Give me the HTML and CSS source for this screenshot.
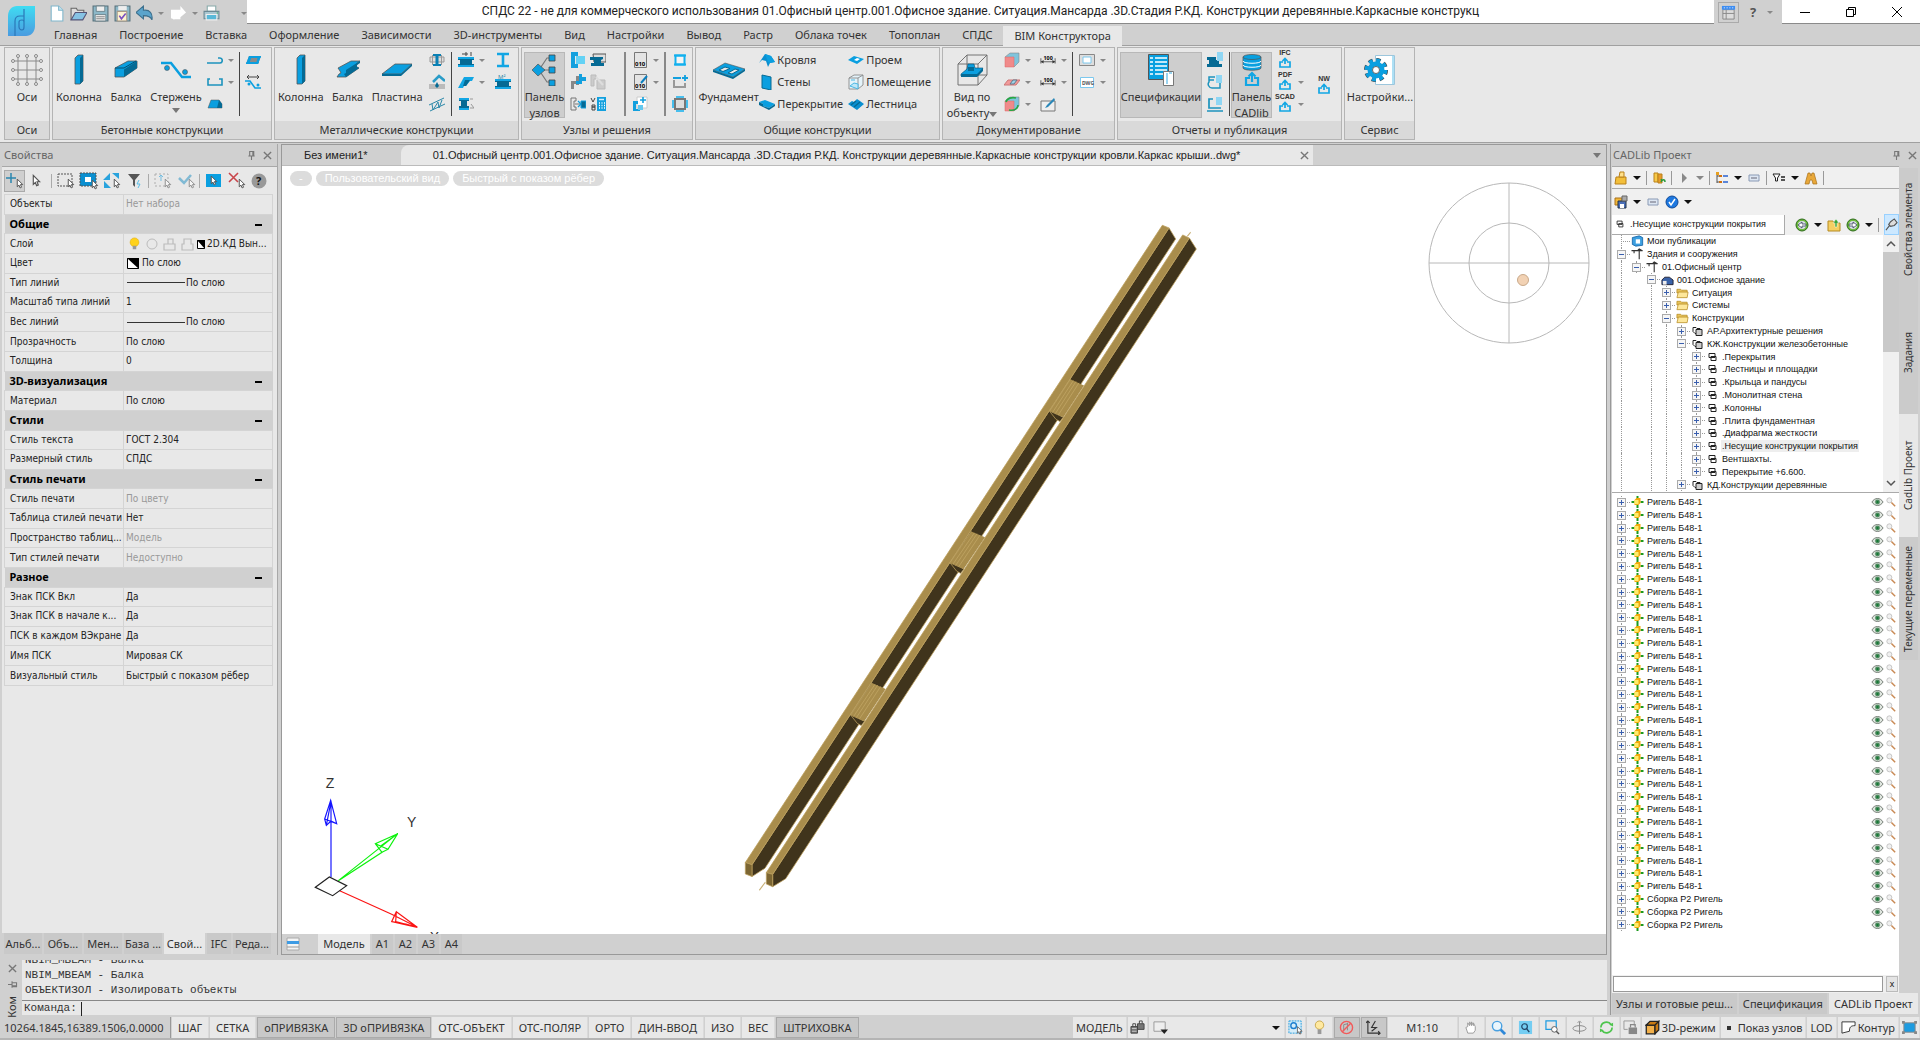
FILE: index.html
```html
<!DOCTYPE html>
<html lang="ru">
<head>
<meta charset="utf-8">
<title>СПДС 22</title>
<link rel="stylesheet" href="styles.css">
</head>
<body>
<svg class="defs" aria-hidden="true">
  <defs>
    <linearGradient id="lg" x1="0" y1="0" x2="0" y2="1"><stop offset="0" stop-color="#3fdcf2"/><stop offset="1" stop-color="#4a9be0"/></linearGradient>
    <symbol id="cur" viewBox="0 0 7 10"><path d="M1 1v7l1.600-1.500L3.600 9l1.300-.6-1-2.400H6z" fill="#fff" stroke="#555" stroke-width=".9"/></symbol>
    <symbol id="pin" viewBox="0 0 10 12"><path d="M3 1.500h4.500v5H3zM1.500 6.500h7M5 6.500V11M6.500 1.500v5" fill="none" stroke="#777" stroke-width="1.200"/></symbol>
    <symbol id="x" viewBox="0 0 10 10"><path d="M1 1l8 8M9 1l-8 8" stroke="#777" stroke-width="1.500"/></symbol>
    <symbol id="col" viewBox="0 0 32 32"><path d="M12 4l3-3h5v26l-3 3h-5z" fill="#0a9fe0" stroke="#555" stroke-width=".8"/><path d="M17 4l3-3v26l-3 3z" fill="#056a94"/></symbol>
    <symbol id="beam" viewBox="0 0 32 32"><path d="M5 14L18 7h9v7L14 23H5z" fill="#0a9fe0" stroke="#555" stroke-width=".8"/><path d="M14 15.500L27 7v7L14 23z" fill="#056a94"/><path d="M5 14h9l12-7" stroke="#044e6e" fill="none"/></symbol>
    <symbol id="rod" viewBox="0 0 32 32"><path d="M1 9h10l11 14h9" stroke="#0a9fe0" stroke-width="2.500" fill="none"/><circle cx="7" cy="14" r="2.500" fill="#0a9fe0" stroke="#555" stroke-width=".6"/><circle cx="25" cy="18" r="2.500" fill="#0a9fe0" stroke="#555" stroke-width=".6"/></symbol>
    <symbol id="axes" viewBox="0 0 32 32"><path d="M7 3v26M16 3v26M25 3v26M3 7h26M3 16h26M3 25h26" stroke="#8a8a8a" fill="none"/><g fill="#eee" stroke="#888"><circle cx="7" cy="2" r="1.500"/><circle cx="16" cy="2" r="1.500"/><circle cx="25" cy="2" r="1.500"/><circle cx="7" cy="30" r="1.500"/><circle cx="16" cy="30" r="1.500"/><circle cx="25" cy="30" r="1.500"/><circle cx="2" cy="7" r="1.500"/><circle cx="2" cy="16" r="1.500"/><circle cx="2" cy="25" r="1.500"/><circle cx="30" cy="7" r="1.500"/><circle cx="30" cy="16" r="1.500"/><circle cx="30" cy="25" r="1.500"/></g></symbol>
    <symbol id="mbeam" viewBox="0 0 32 32"><path d="M6 14L19 7h9l-3 2v2l-2 1 4 2-13 9H5l2-3 2-1-1-2z" fill="#0a9fe0" stroke="#555" stroke-width=".8"/><path d="M14 16l14-9v2l-3 2v2l2 1-13 9-2-3 2-1z" fill="#056a94"/></symbol>
    <symbol id="plate" viewBox="0 0 32 32"><path d="M1 20L14 10h17L20 20z" fill="#0a9fe0" stroke="#555" stroke-width=".8"/><path d="M1 20v2h19l11-10v-2L20 20z" fill="#056a94"/></symbol>
    <symbol id="nodes" viewBox="0 0 32 32"><path d="M10 16L18 4h6M10 16h14M10 16l8 12h6" stroke="#777" fill="none" stroke-width="1.200"/><path d="M3 16l6-6 7 6-7 6z" fill="#0a9fe0" stroke="#555" stroke-width=".7"/><path d="M20 1h6v6h-6zM20 13h6v6h-6zM20 26h6v6h-6z" fill="#0a9fe0" stroke="#444" stroke-width=".8"/></symbol>
    <symbol id="found" viewBox="0 0 32 32"><path d="M0 16l12-7 20 6-12 8z" fill="#0a9fe0" stroke="#555" stroke-width=".6"/><path d="M6 16l6-3 5 1.500-7 3zM15 19l7-4 4 1-7 4z" fill="#e8e8e8" stroke="#056a94"/><path d="M0 16v2l20 7 12-8v-2l-12 8z" fill="#056a94"/></symbol>
    <symbol id="viewobj" viewBox="0 0 32 32"><path d="M2 10l9-9h20v20l-9 10H2zM2 10h20v21M22 10l9-9M11 1v20M11 21h20" stroke="#666" fill="none" stroke-width=".9"/><path d="M5 20l6-5 1-5h6l1 4h8l-6 8H5z" fill="#0a9fe0" stroke="#044e6e" stroke-width=".6"/><path d="M5 20h16v3H5zM12 13h6v4h-6zM21 20l6-6v3l-6 6z" fill="#056a94"/></symbol>
    <symbol id="spec" viewBox="0 0 32 32"><path d="M3.500.5h20v25h-20z" fill="#08a0e0" stroke="#555"/><path d="M5 4h3m2 0h12M5 8h3m2 0h12M5 12h3m2 0h12M5 16h3m2 0h12M5 20h3m2 0h12" stroke="#fff" stroke-width="1.300"/><path d="M18.500 17.500h10v14h-10z" fill="#fff" stroke="#777"/><path d="M22 19v11M24 19h3" stroke="#9ad4f0" stroke-width="2"/></symbol>
    <symbol id="db" viewBox="0 0 32 32"><path d="M7 3v11c0 3 18 3 18 0V3z" fill="#08a0e0" stroke="#555" stroke-width=".7"/><ellipse cx="16" cy="3" rx="9" ry="2.500" fill="#08a0e0" stroke="#555" stroke-width=".7"/><path d="M7 7c0 3 18 3 18 0M7 11c0 3 18 3 18 0" stroke="#fff" fill="none"/><path d="M16 28V19m-3.500 3.500L16 19l3.500 3.500M14 24h-4v7h12v-7h-4" stroke="#12a6e4" stroke-width="2.200" fill="none"/></symbol>
    <symbol id="gear" viewBox="0 0 32 32"><path d="M11.500 1.500h19v29h-19z" fill="#fff" stroke="#9cc6dc"/><path d="M29 2v28" stroke="#ade0f5" stroke-width="2"/><circle cx="12" cy="16" r="9.500" fill="none" stroke="#444" stroke-width="5" stroke-dasharray="4 3.460"/><circle cx="12" cy="16" r="9.300" fill="none" stroke="#0a9fe0" stroke-width="4.200" stroke-dasharray="3.800 3.500"/><circle cx="12" cy="16" r="6" fill="none" stroke="#0a9fe0" stroke-width="5"/><circle cx="12" cy="16" r="3.500" fill="#fff" stroke="#444" stroke-width=".8"/></symbol>
    <symbol id="up" viewBox="0 0 16 16"><path d="M8 12V7M5.500 9L8 6.500 10.500 9M6 10H3v5h10v-5h-3" stroke="#12a6e4" stroke-width="1.700" fill="none"/></symbol>
    <symbol id="hook1" viewBox="0 0 16 16"><path d="M0 11h13c3 0 3-5 0-5h-2" stroke="#1c93bd" stroke-width="1.600" fill="none"/></symbol>
    <symbol id="hook2" viewBox="0 0 16 16"><path d="M3 5H1v6h14V5h-3" stroke="#1c93bd" stroke-width="1.600" fill="none"/></symbol>
    <symbol id="block" viewBox="0 0 16 16"><path d="M1 12L4 4h8l3 4v4z" fill="#0a9fe0" stroke="#555" stroke-width=".5"/><path d="M10 12l2-8 3 4v4z" fill="#056a94"/></symbol>
    <symbol id="slab" viewBox="0 0 16 16"><path d="M1 12L4 4h12l-3 8z" fill="#8a8a8a"/><path d="M4 4h12l-.6 2H4zM1 12l.6-2H14l-1 2z" fill="#0a9fe0"/><path d="M1 12L4 4h3l-3 8zM13 4h3l-3 8h-2z" fill="#0a9fe0"/></symbol>
    <symbol id="rodm" viewBox="0 0 16 16"><path d="M2 3h12M4 1L2 3l2 2M12 1l2 2-2 2" stroke="#444" fill="none"/><path d="M0 7h5l5 7h6" stroke="#0a9fe0" stroke-width="1.600" fill="none"/><circle cx="4" cy="10" r="1.500" fill="#0a9fe0"/><circle cx="13" cy="11" r="1.500" fill="#0a9fe0"/></symbol>
    <symbol id="sec" viewBox="0 0 16 16"><path d="M1 5h14v5H1zM3.500 3v10M12.500 3v10" stroke="#999" fill="#ddd"/><path d="M4 2h8v2H9.500v8H12v2H4v-2h2.500V4H4z" fill="#0a80b4"/></symbol>
    <symbol id="anc" viewBox="0 0 16 16"><path d="M4 8l6-6 6 5" stroke="#2a9cc8" stroke-width="2.500" fill="none"/><path d="M0 10h16v5H0z" fill="#bbb"/><path d="M8 8l2 4-2 2-2-2z" fill="#066a94"/></symbol>
    <symbol id="truss" viewBox="0 0 16 16"><path d="M0 9L15 2M1 15L16 8M3 8l1 6 5-8 1 6 3-8" stroke="#2a87a8" fill="none"/></symbol>
    <symbol id="ib" viewBox="0 0 16 16"><path d="M0 5h16v3h-2v4h2v3H0v-3h2V8H0z" fill="#056a94"/><path d="M0 5h16v2H0zM0 13h16v2H0z" fill="#12a6e4"/></symbol>
    <symbol id="ibt" viewBox="0 0 16 16"><use href="#ib"/><path d="M4 2h6M8 0v4M13 0v4" stroke="#444"/></symbol>
    <symbol id="ibp" viewBox="0 0 16 16"><path d="M0 14L6 3h10l-2 4h-2L8 12H6l-1 2z" fill="#12a6e4"/><path d="M7 6h5l-4 6H5z" fill="#056a94"/></symbol>
    <symbol id="ibc" viewBox="0 0 16 16"><path d="M12 3h3M13 8l3 4h-4" stroke="#999" fill="none"/><path d="M1 2h10v3H9v5h2v4H1v-4h2V5H1z" fill="#056a94"/><path d="M1 2h10v2H1zM1 12h10v2H1z" fill="#12a6e4"/></symbol>
    <symbol id="I" viewBox="0 0 16 16"><path d="M2 2h12M2 14h12M8 2v12" stroke="#12a6e4" stroke-width="2.600"/></symbol>
    <symbol id="n1" viewBox="0 0 16 16"><path d="M1 0h7v4H5v8h3v4H1z" fill="#12a0de"/><path d="M6 4h9v8H6z" fill="#63d2f5"/></symbol>
    <symbol id="n2" viewBox="0 0 16 16"><path d="M1 7h5v3H4v5H1zM6 2h5v3H9v6H6z" fill="#888"/><path d="M9 0h3v10H6V7h3zM12 3h4v4h-4z" fill="#12a0de"/></symbol>
    <symbol id="n3" viewBox="0 0 16 16"><path d="M6 2H1v12h5v-3H4V5h2zM5 8h5" stroke="#777" fill="none"/><path d="M8 5l3 3-3 3" stroke="#12a0de" fill="none" stroke-width="1.300"/><path d="M11 5h5v7h-5z" fill="#066a94" stroke="#12a0de"/></symbol>
    <symbol id="n4" viewBox="0 0 16 16"><path d="M3 2h13v8H4z" fill="#ddd" stroke="#555"/><path d="M0 5h13v2l-2 1v3h3v3H1v-3h3V8H0z" fill="#056a94"/></symbol>
    <symbol id="n5" viewBox="0 0 16 16"><path d="M1 1h5v4H4v7H1zM7 6h8v9H7z" fill="#ccc" stroke="#bbb"/><path d="M6 3l7 8" stroke="#ddd" stroke-width="2"/></symbol>
    <symbol id="n6" viewBox="0 0 16 16"><path d="M7 1h9v14H7z" fill="#12a0de"/><path d="M9 3.500h5" stroke="#cfefff" stroke-width="1.500"/><path d="M9 7h1m1.500 0h1m1.500 0h1M9 9.500h1m1.500 0h1m1.500 0h1M9 12h1m1.500 0h1m1.500 0h1" stroke="#fff" stroke-width="1.300"/><path d="M1 2l2 4 2-4M2 9h3v2H2zM2 11h3v3H2z" stroke="#444" fill="none"/></symbol>
    <symbol id="o1" viewBox="0 0 16 16"><path d="M2.500.5h12v15h-12z" fill="#e4e4e4" stroke="#777"/><text x="3" y="14" font-size="6" font-weight="bold">010</text></symbol>
    <symbol id="o2" viewBox="0 0 16 16"><use href="#o1"/><path d="M15 2L9 9" stroke="#0a7fc0" stroke-width="2"/></symbol>
    <symbol id="o3" viewBox="0 0 16 16"><path d="M5 1h10v11H5z" fill="#fff" stroke="#ccc"/><path d="M1 5h5v3H4v5h4v2H1z" fill="#12a0de"/><path d="M6 9h5v5H6z" fill="#63c8ef"/><path d="M11 1v6M8 4h6" stroke="#12a0de" stroke-width="1.600"/></symbol>
    <symbol id="q1" viewBox="0 0 16 16"><path d="M3.500 3.500h9v9h-9z" stroke="#12b0ee" stroke-width="2" fill="#f4f4f4"/><path d="M2 3.500h12M2 12.500h12" stroke="#12b0ee" stroke-width="2"/></symbol>
    <symbol id="q2" viewBox="0 0 16 16"><path d="M2 6v7h11V9" stroke="#999" stroke-width="2" fill="none"/><path d="M1 4h8M13 1v6M10 4h6" stroke="#12a0de" stroke-width="1.800"/></symbol>
    <symbol id="q3" viewBox="0 0 16 16"><path d="M3 3h10v10H3z" stroke="#777" stroke-width="2" fill="#ddd"/><path d="M4 1h8M4 15h8M1 4v8M15 4v8" stroke="#12b0ee" stroke-width="1.500"/></symbol>
    <symbol id="roof" viewBox="0 0 16 16"><path d="M0 11L6 2l6 2 4 6-5 1-2 4-2-6-4-1z" fill="#0a8fd0"/><path d="M6 2l3 8 2 1 5-1-4-6z" fill="#0a9fe0"/></symbol>
    <symbol id="wall" viewBox="0 0 16 16"><path d="M3 1l9 2v13l-9-2z" fill="#0a9fe0" stroke="#066a94"/></symbol>
    <symbol id="floor" viewBox="0 0 16 16"><path d="M0 6l6-2 10 4-6 4-6-2v-2z" fill="#0a9fe0"/><path d="M0 6l4 2v2l6 2 6-4v2l-6 4L0 9z" fill="#056a94"/></symbol>
    <symbol id="open" viewBox="0 0 16 16"><path d="M0 8l6-4 10 3-7 5z" fill="#0a9fe0"/><path d="M6 8l3-2 3 1-3 2z" fill="#fff"/></symbol>
    <symbol id="room" viewBox="0 0 16 16"><path d="M1 4l5-3h9v10l-5 4H1zM1 4h9v11M10 4l5-3" stroke="#8a8a8a" fill="#e4f3fa" stroke-width=".9"/><path d="M2 12l4-3 4 1v5zM3 6h4" stroke="#4ab8e4" fill="#bfe6f7"/></symbol>
    <symbol id="stair" viewBox="0 0 16 16"><path d="M0 8l4-3 2 1 3-3 3 2 4 3-7 6z" fill="#0a8fd0"/><path d="M3 9l5-4M6 11l6-5" stroke="#056a94" stroke-width="1.300"/></symbol>
    <symbol id="cube" viewBox="0 0 16 16"><path d="M1 5l5-4h9v9l-5 5z" fill="#7fc4dc" stroke="#888" stroke-width=".6"/><path d="M1 5h9v10H1z" fill="#f08a8a" stroke="#d66" stroke-width=".5"/></symbol>
    <symbol id="cut" viewBox="0 0 16 16"><path d="M0 11l4-5h12l-4 5z" fill="#f29a9a" stroke="#c77"/><path d="M6 10l3-4h4l-3 4z" fill="#9ad4ea" stroke="#678"/></symbol>
    <symbol id="cubeg" viewBox="0 0 16 16"><use href="#cube"/><path d="M2 6c1-4 6-5 10-4M14 9c0 4-4 6-9 5" stroke="#27a745" stroke-width="1.600" fill="none"/></symbol>
    <symbol id="dim" viewBox="0 0 18 16"><path d="M1 6v6M17 6v6M1 10h16" stroke="#555"/><path d="M1 10l3-2v4zM17 10l-3-2v4z" fill="#333"/><text x="4" y="8" font-size="6" font-weight="bold">100</text></symbol>
    <symbol id="edit" viewBox="0 0 16 16"><path d="M1 5h14v10H1z" fill="#eee" stroke="#777"/><path d="M14 2L7 9l-2 3 3-1 7-7z" fill="#2a87b8"/></symbol>
    <symbol id="vp" viewBox="0 0 16 16"><path d="M.5 2.500h15v11H.5z" fill="#ddd" stroke="#888"/><path d="M4 5h8v6H4z" fill="#fff" stroke="#7cc8ee"/></symbol>
    <symbol id="dwg" viewBox="0 0 16 16"><path d="M1.500 3.500h13v10h-13z" fill="#fff" stroke="#7cc8ee"/><text x="3" y="11" font-size="5" font-weight="bold" fill="#555">DWG</text></symbol>
    <symbol id="r1" viewBox="0 0 16 16"><path d="M0 5h9v3h3v4h3v3H0v-3h2V8H0z" fill="#066a94"/><path d="M10 0h6v9h-6z" fill="#8fd6f4"/></symbol>
    <symbol id="r2" viewBox="0 0 16 16"><path d="M8 3H2v5c-2 2 0 6 3 6h8v-5M2 6h5" stroke="#1c93bd" stroke-width="1.500" fill="none"/><path d="M9 1h6v8H9z" fill="#8fd6f4"/></symbol>
    <symbol id="r3" viewBox="0 0 16 16"><path d="M6 3H2v9h12M0 15h16" stroke="#1c93bd" stroke-width="1.700" fill="none"/><path d="M9 1h6v8H9z" fill="#8fd6f4"/></symbol>
    <symbol id="folder" viewBox="0 0 14 12"><path d="M1 2h4l1 1h6v3H1z" fill="#e8c35a" stroke="#b58a20" stroke-width=".8"/><path d="M1 11L2.500 5H13l-1 6z" fill="#fde79a" stroke="#b58a20" stroke-width=".8"/></symbol>
    <symbol id="doc" viewBox="0 0 12 12"><path d="M2.500 2.500h6v4h-6zM4.500 5.500h5v4h-5z" fill="#fff" stroke="#222"/></symbol>
    <symbol id="docs" viewBox="0 0 12 12"><path d="M1.500 2.500h3l1 1h3v5h-5l-2-2z" fill="#fff" stroke="#222"/><path d="M4.500 4.500h6v6h-6z" fill="#ccc" stroke="#222"/></symbol>
    <symbol id="crane" viewBox="0 0 14 14"><path d="M0 3h13M3 3v3M9 1v12M7 3l2-2 3 2" stroke="#333" stroke-width="1.300" fill="none"/></symbol>
    <symbol id="house" viewBox="0 0 14 12"><path d="M1 6l3-3h5l4 3v5H1z" fill="#3a62a8" stroke="#223"/><path d="M2 7h4v4H2z" fill="#eee"/></symbol>
    <symbol id="pub" viewBox="0 0 14 14"><path d="M1 3l8-2 4 2v9l-8 1-4-2z" fill="#3c9fe0" stroke="#1766a8"/><path d="M5 5h5v5H5z" fill="#fff"/></symbol>
    <symbol id="part" viewBox="0 0 12 12"><path d="M5 0h2v3H5zM5 9h2v3H5zM0 5h3v2H0zM9 5h3v2H9z" fill="#1d9a1d"/><path d="M3 4l2-2h4v5L7 9H3z" fill="#f2a90a"/><path d="M3 4h4v4H3z" fill="#ffec6a"/></symbol>
    <symbol id="eye" viewBox="0 0 14 10"><path d="M1 5c3-5 9-5 12 0-3 5-9 5-12 0z" fill="#dfe6df" stroke="#6d756d"/><circle cx="7" cy="5" r="2.600" fill="#4d8a5e"/><circle cx="7" cy="5" r="1.200" fill="#173"/></symbol>
    <symbol id="mag" viewBox="0 0 12 12"><circle cx="4" cy="4" r="3" fill="#f0f0f0" stroke="#bdbdbd"/><path d="M6.500 6.500L11 11" stroke="#c98a55" stroke-width="1.800"/></symbol>
    <symbol id="zoomb" viewBox="0 0 16 16"><path d="M10 10l5 5" stroke="#2f88d8" stroke-width="3"/><circle cx="6.500" cy="6.500" r="5" fill="#eaf6fd" stroke="#49a0e0" stroke-width="1.500"/></symbol>
    <symbol id="bulb" viewBox="0 0 14 16"><circle cx="7" cy="6" r="5" fill="#ffd21a" stroke="#e0a800" stroke-width=".6"/><path d="M5 10h4v4H5z" fill="#999"/></symbol>
  </defs>
</svg>

<header class="titlebar">
  <nav class="quick" aria-label="Быстрый доступ">
    <button aria-label="Создать"><svg viewBox="0 0 16 16"><path d="M3 1h7l4 4v10H3z" fill="#fff" stroke="#7fb6cc"/><path d="M10 1v4h4" fill="#c4e4ef" stroke="#7fb6cc"/></svg></button>
    <button aria-label="Открыть"><svg viewBox="0 0 16 16"><path d="M1 14V3h5l1 2h6v3" fill="#ddd" stroke="#666"/><path d="M1 14L5 7h11l-4 7z" fill="#86c3e4" stroke="#557"/></svg></button>
    <button aria-label="Сохранить"><svg viewBox="0 0 16 16"><path d="M1 1h14v14H1z" fill="#8db8c8" stroke="#56707a"/><path d="M4 1h8v5H4zM3 9h10v6H3z" fill="#eee" stroke="#56707a" stroke-width=".7"/><path d="M4 11h8M4 13h8" stroke="#888"/></svg></button>
    <button aria-label="Сохранить как"><svg viewBox="0 0 16 16"><path d="M1 1h14v14H1z" fill="#8db8c8" stroke="#56707a"/><path d="M4 1h8v4H4z" fill="#eee"/><path d="M3 6h9v9H3z" fill="#fdf3d0" stroke="#a98"/><path d="M5 10l2 3 4-5" stroke="#7b4fc0" stroke-width="1.500" fill="none"/></svg></button>
    <button class="w22" aria-label="Отменить"><svg viewBox="0 0 16 16"><path d="M0 7l7-6v4c6-1 9 3 8 9-1-3-4-4-8-4v3z" fill="#5aa4cc" stroke="#3c6f8c"/></svg><i class="dn"></i></button>
    <button class="w22" aria-label="Вернуть"><svg viewBox="0 0 18 16"><path d="M17 7L11 0v4H1v9c2 0 2 2 4 1h6v-2z" fill="#fff"/></svg><i class="dn"></i></button>
    <button aria-label="Печать"><svg viewBox="0 0 16 16"><path d="M4 1h8v5H4z" fill="#fff" stroke="#8aa"/><path d="M1 6h14v7H1z" fill="#a9c7d2" stroke="#6a8894"/><path d="M3 9h10v5H3z" fill="#58b8d8" stroke="#eee"/><path d="M13 7h1v1h-1z" fill="#2a4"/></svg></button>
    <i class="dn more"></i>
  </nav>
  <h1>СПДС 22 - не для коммерческого использования 01.Офисный центр.001.Офисное здание. Ситуация.Мансарда .3D.Стадия Р.КД. Конструкции деревянные.Каркасные конструкц</h1>
  <div class="help">
    <button class="framed" aria-label="Интерфейс"><svg viewBox="0 0 16 16"><path d="M2 5h12v10H2zM5.500 5v10M2 9h12" stroke="#888" fill="#ddd"/><path d="M1 1h14v4H1z" fill="#3d8df2"/><path d="M3 3h1m2 0h1m2 0h1m2 0h1" stroke="#fff"/></svg></button>
    <span>?</span><i class="dn"></i>
  </div>
  <div class="winbtns">
    <button aria-label="Свернуть"><svg viewBox="0 0 10 10"><path d="M0 5.500h10" stroke="#000"/></svg></button>
    <button aria-label="Развернуть"><svg viewBox="0 0 10 10"><path d="M.5 2.500h7v7h-7zM2.500 2.500v-2h7v7h-2" stroke="#000" fill="none"/></svg></button>
    <button aria-label="Закрыть"><svg viewBox="0 0 10 10"><path d="M0 0l10 10M10 0L0 10" stroke="#000"/></svg></button>
  </div>
</header>
<svg class="logo" viewBox="0 0 27 30"><path d="M9 0h18v20c0 6-4 10-9 10H0V10C0 4 4 0 9 0z" fill="url(#lg)"/><path d="M7 30V15c0-3 2-5 5-5h4V3M11 20v-4c0-1 1-2 3-2s2 1 2 2v5c0 2-1 3-2 3s-3-1-3-3zM16 3v14" stroke="#2a78b8" stroke-width="1.200" fill="none"/></svg>
<nav class="menu">
  <a href="#">Главная</a><a href="#">Построение</a><a href="#">Вставка</a><a href="#">Оформление</a><a href="#">Зависимости</a><a href="#">3D-инструменты</a><a href="#">Вид</a><a href="#">Настройки</a><a href="#">Вывод</a><a href="#">Растр</a><a href="#">Облака точек</a><a href="#">Топоплан</a><a href="#">СПДС</a><a href="#" class="on">BIM Конструктора</a>
</nav>

<section class="ribbon">
  <div class="group g-axes"><div class="tools"><button class="big w43"><svg><use href="#axes"/></svg>Оси</button></div><h2>Оси</h2></div>
  <div class="group g-conc"><div class="tools">
    <button class="big w48"><svg><use href="#col"/></svg>Колонна</button><button class="big w46"><svg><use href="#beam"/></svg>Балка</button><button class="big w54"><svg><use href="#rod"/></svg>Стержень<i class="dn lg"></i></button>
    <div class="col"><button><svg><use href="#hook1"/></svg><i class="dn"></i></button><button><svg><use href="#hook2"/></svg><i class="dn"></i></button><button><svg><use href="#block"/></svg></button></div>
    <hr>
    <div class="col"><button><svg><use href="#slab"/></svg></button><button><svg><use href="#rodm"/></svg></button></div>
  </div><h2>Бетонные конструкции</h2></div>
  <div class="group g-met"><div class="tools">
    <button class="big w48"><svg><use href="#col"/></svg>Колонна</button><button class="big w46"><svg><use href="#mbeam"/></svg>Балка</button><button class="big w54"><svg><use href="#plate"/></svg>Пластина</button>
    <div class="col"><button><svg><use href="#sec"/></svg></button><button><svg><use href="#anc"/></svg></button><button><svg><use href="#truss"/></svg></button></div>
    <hr>
    <div class="col"><button><svg><use href="#ibt"/></svg><i class="dn"></i></button><button><svg><use href="#ibp"/></svg><i class="dn"></i></button><button><svg><use href="#ibc"/></svg></button></div>
    <div class="col"><button><svg><use href="#I"/></svg></button><button><svg viewBox="0 0 16 16"><use href="#ib"/><text x="3" y="5" font-size="6" fill="#2a87a8">М²</text></svg></button></div>
  </div><h2>Металлические конструкции</h2></div>
  <div class="group g-node"><div class="tools">
    <button class="big w42 on"><svg><use href="#nodes"/></svg><span>Панель<br>узлов</span></button>
    <div class="col"><button><svg><use href="#n1"/></svg></button><button><svg><use href="#n2"/></svg></button><button><svg><use href="#n3"/></svg></button></div>
    <div class="col next"><button><svg><use href="#n4"/></svg></button><button><svg><use href="#n5"/></svg></button><button><svg><use href="#n6"/></svg></button></div>
    <hr class="soft">
    <div class="col"><button><svg><use href="#o1"/></svg><i class="dn"></i></button><button><svg><use href="#o2"/></svg><i class="dn"></i></button><button><svg><use href="#o3"/></svg></button></div>
    <hr class="soft">
    <div class="col"><button><svg><use href="#q1"/></svg></button><button><svg><use href="#q2"/></svg></button><button><svg><use href="#q3"/></svg></button></div>
  </div><h2>Узлы и решения</h2></div>
  <div class="group g-gen"><div class="tools">
    <button class="big w65"><svg><use href="#found"/></svg>Фундамент</button>
    <div class="col txt"><button><svg><use href="#roof"/></svg>Кровля</button><button><svg><use href="#wall"/></svg>Стены</button><button><svg><use href="#floor"/></svg>Перекрытие</button></div>
    <div class="col txt"><button><svg><use href="#open"/></svg>Проем</button><button><svg><use href="#room"/></svg>Помещение</button><button><svg><use href="#stair"/></svg>Лестница</button></div>
  </div><h2>Общие конструкции</h2></div>
  <div class="group g-doc"><div class="tools">
    <button class="big w54"><svg><use href="#viewobj"/></svg><span>Вид по<br>объекту<i class="dn lg"></i></span></button>
    <div class="col"><button><svg><use href="#cube"/></svg><i class="dn"></i></button><button><svg><use href="#cut"/></svg><i class="dn"></i></button><button><svg><use href="#cubeg"/></svg><i class="dn"></i></button></div>
    <div class="col"><button><svg><use href="#dim"/></svg><i class="dn"></i></button><button><svg><use href="#dim"/></svg><i class="dn"></i></button><button><svg><use href="#edit"/></svg></button></div>
    <hr>
    <div class="col"><button><svg><use href="#vp"/></svg><i class="dn"></i></button><button><svg><use href="#dwg"/></svg><i class="dn"></i></button></div>
  </div><h2>Документирование</h2></div>
  <div class="group g-rep"><div class="tools">
    <button class="big w82 on"><svg><use href="#spec"/></svg>Спецификации</button>
    <div class="col"><button><svg><use href="#r1"/></svg></button><button><svg><use href="#r2"/></svg></button><button><svg><use href="#r3"/></svg></button></div>
    <hr>
    <button class="big w42 on"><svg><use href="#db"/></svg><span>Панель<br>CADlib</span></button>
    <div class="col"><button class="exp"><span>IFC</span><svg><use href="#up"/></svg></button><button class="exp"><span>PDF</span><svg><use href="#up"/></svg><i class="dn"></i></button><button class="exp"><span>SCAD</span><svg><use href="#up"/></svg><i class="dn"></i></button></div>
    <div class="col mid"><button class="exp"><span>NW</span><svg><use href="#up"/></svg></button></div>
  </div><h2>Отчеты и публикация</h2></div>
  <div class="group g-srv"><div class="tools"><button class="big w65"><svg><use href="#gear"/></svg>Настройки...</button></div><h2>Сервис</h2></div>
</section>

<main class="work">
  <section class="panel props">
    <h2 class="ptitle">Свойства<span class="pc"><svg class="pin"><use href="#pin"/></svg><svg class="px"><use href="#x"/></svg></span></h2>
    <div class="pbar">
      <button class="on" aria-label="Добавить"><svg viewBox="0 0 20 18"><path d="M6 1v10M1 6h10" stroke="#2a87b0" stroke-width="1.500"/><use href="#cur" x="11" y="6" width="8" height="11"/></svg></button>
      <button aria-label="Выбор"><svg viewBox="0 0 20 18"><use href="#cur" x="4" y="2" width="9" height="13"/></svg></button>
      <hr>
      <button aria-label="Рамка"><svg viewBox="0 0 20 18"><path d="M2 2h14v12H2z" stroke="#555" stroke-dasharray="2 1" fill="none"/><use href="#cur" x="11" y="6" width="8" height="11"/></svg></button>
      <button aria-label="Все"><svg viewBox="0 0 20 18"><path d="M1 1h16v13H1z" fill="#0a8fd0" stroke="#555" stroke-dasharray="2 1"/><path d="M6 5h6v5H6z" fill="#fff"/><use href="#cur" x="12" y="7" width="8" height="11"/></svg></button>
      <button aria-label="Инверсия"><svg viewBox="0 0 20 18"><path d="M1 8L8 1v7zM10 1h7v6zM2 9l7 7H2z" fill="#29a3dd"/><use href="#cur" x="11" y="6" width="8" height="11"/></svg></button>
      <button aria-label="Фильтр"><svg viewBox="0 0 20 18"><path d="M3 2h12l-5 6v7l-2-2V8z" fill="#555"/><path d="M14 8l-2 4h3l-2 4" stroke="#5bc0ea" fill="none"/></svg></button>
      <hr>
      <button aria-label="Поднять"><svg viewBox="0 0 20 18" opacity=".6"><path d="M2 2h13v12H2z" stroke="#888" stroke-dasharray="2 2" fill="none"/><path d="M8 9V3M6 5l2-2 2 2" stroke="#29a3dd" fill="none"/><use href="#cur" x="11" y="6" width="8" height="11"/></svg></button>
      <button aria-label="Применить"><svg viewBox="0 0 20 18" opacity=".6"><path d="M3 6l5 5 7-8" stroke="#3d9cc8" stroke-width="2.500" fill="none"/><use href="#cur" x="12" y="6" width="8" height="11"/></svg></button>
      <hr>
      <button aria-label="Блок"><svg viewBox="0 0 20 18"><path d="M2 2h15v13H2z" fill="#0a9fe0"/><use href="#cur" x="6" y="3" width="8" height="11"/></svg></button>
      <button aria-label="Снять"><svg viewBox="0 0 20 18"><path d="M2 1l9 9M11 1l-9 9" stroke="#c8454a" stroke-width="1.600"/><use href="#cur" x="11" y="6" width="8" height="11"/></svg></button>
      <button aria-label="Справка"><svg viewBox="0 0 20 18"><circle cx="9" cy="9" r="7.500" fill="#999"/><text x="6" y="13" font-size="11" font-weight="bold" fill="#111">?</text></svg></button>
    </div>
    <table class="ptable">
      <tr><td>Объекты<td class="dim">Нет набора
      <tr class="h"><th colspan="2">Общие<b></b>
      <tr><td>Слой<td class="lay"><svg class="layi" viewBox="0 0 78 16"><use href="#bulb" x="1" y="1" width="13" height="14"/><circle cx="25" cy="8" r="5" fill="none" stroke="#bbb"/><path d="M37 8h11v6H37zM41 8V3h5v5" fill="none" stroke="#bbb" stroke-width="1.200"/><path d="M55 8h2V3h7v5h2v6H55z" fill="none" stroke="#bbb" stroke-width="1.200"/><path d="M70.500 4.500h7v8h-7z" fill="#fff" stroke="#000"/><path d="M70 4h8v9z"/></svg>2D.КД Вын...
      <tr><td>Цвет<td><svg class="swatch" viewBox="0 0 12 11"><path d="M.5.5h11v10H.5z" fill="#fff" stroke="#000"/><path d="M0 0h12v11z"/></svg>По слою
      <tr><td>Тип линий<td><i class="line"></i>По слою
      <tr><td>Масштаб типа линий<td>1
      <tr><td>Вес линий<td><i class="line"></i>По слою
      <tr><td>Прозрачность<td>По слою
      <tr><td>Толщина<td>0
      <tr class="h"><th colspan="2">3D-визуализация<b></b>
      <tr><td>Материал<td>По слою
      <tr class="h"><th colspan="2">Стили<b></b>
      <tr><td>Стиль текста<td>ГОСТ 2.304
      <tr><td>Размерный стиль<td>СПДС
      <tr class="h"><th colspan="2">Стиль печати<b></b>
      <tr><td>Стиль печати<td class="dim">По цвету
      <tr><td>Таблица стилей печати<td>Нет
      <tr><td>Пространство таблиц...<td class="dim">Модель
      <tr><td>Тип стилей печати<td class="dim">Недоступно
      <tr class="h"><th colspan="2">Разное<b></b>
      <tr><td>Знак ПСК Вкл<td>Да
      <tr><td>Знак ПСК в начале к...<td>Да
      <tr><td>ПСК в каждом ВЭкране<td>Да
      <tr><td>Имя ПСК<td>Мировая СК
      <tr><td>Визуальный стиль<td>Быстрый с показом рёбер
    </table>
    <div class="btabs"><button>Альб...</button><button>Объ...</button><button>Мен...</button><button>База ...</button><button class="on">Свой...</button><button>IFC</button><button>Реда...</button></div>
  </section>

  <section class="docs">
    <div class="dtabs"><button class="t1">Без имени1*</button><button class="t2 on"><span>01.Офисный центр.001.Офисное здание. Ситуация.Мансарда .3D.Стадия Р.КД. Конструкции деревянные.Каркасные конструкции кровли.Каркас крыши..dwg*</span><svg class="px"><use href="#x"/></svg></button><i class="dn lg"></i></div>
    <div class="canvas">
      <div class="pills"><span>-</span><span>Пользовательский вид</span><span>Быстрый с показом рёбер</span></div>
      <svg class="model" viewBox="0 0 1440 1568" preserveAspectRatio="none">
        <path d="M1372 62l10-9M106 1530l-18 18" stroke="#c9b27a" stroke-width="3"/>
        <g stroke="#bb9f5c" stroke-width="2" stroke-linejoin="round">
          <path d="M1317 43l20 25L105 1498l-39 19v-27z" fill="#40341c"/>
          <path d="M1297 37l20 6L66 1490l-20-5z" fill="#a98d4c"/>
          <path d="M46 1485l20 5v27l-20-6z" fill="#7c6633"/>
          <g fill="#40341c"><path d="M958 459l42 14-10 10-12-5z"/><path d="M660 804l42 14-10 10-12-5z"/><path d="M362 1150l42 14-10 10-12-5z"/></g>
          <g fill="#a98d4c" stroke="none"><path d="M1021 387l41 14-62 72-42-14z"/><path d="M724 733l41 13-64 72-41-14z"/><path d="M426 1077l41 14-64 73-41-14z"/></g>
          <path d="M1021 387l-62 72M1030 390l-62 72M1038 392l-62 73M1047 395l-62 73M724 733l-64 71M733 736l-64 71M741 738l-64 72M750 741l-64 72M426 1077l-64 73M435 1080l-64 73M443 1082l-64 74M452 1085l-64 74" stroke="#c2a766" fill="none"/>
          <path d="M1378 66l21 25L167 1522l-39 18v-28z" fill="#40341c"/>
          <path d="M1358 59l20 7L128 1512l-19-4z" fill="#a98d4c"/>
          <path d="M109 1508l19 4v28l-19-6z" fill="#7c6633"/>
        </g>
      </svg>
      <svg class="compass" viewBox="0 0 164 164"><g fill="none" stroke="#b8b8b8"><circle cx="82" cy="82" r="80"/><circle cx="82" cy="82" r="40"/><path d="M82 2v160M2 82h160"/></g><circle cx="96" cy="99" r="5.500" fill="#f2d2b4" stroke="#c9a98a"/></svg>
      <svg class="ucs" viewBox="845 30 504 492">
        <g fill="none" stroke-width="3.500"><path d="M992 352V122M973 177l18-56 18 70-17-8-14 13zM978 196l14-72M973 177l36 14" stroke="#1414ff"/><path d="M1014 362L1192 221l-67 30 20 26zM1125 251l38 17 29-47-52 38M1163 268l-18 9" stroke="#0df20d"/><path d="M1018 392l156 71M1188 455l63 47-77-17zM1188 455l-2 30 65 17-34-10-43-7M1174 463l77 39" stroke="#fb1414"/><path d="M945 382l42-31 52 26-42 30z" stroke="#222"/></g>
        <text x="976" y="84">Z</text><text x="1220" y="202">Y</text><text x="1288" y="545">X</text>
      </svg>
    </div>
    <div class="mtabs"><svg viewBox="0 0 14 14"><path d="M1 1h12v12H1z" fill="#f4f4f4" stroke="#aaa"/><path d="M1 4h12v3H1z" fill="#3d9be4"/><path d="M1 10h12" stroke="#999"/></svg><button class="on">Модель</button><button>A1</button><button>A2</button><button>A3</button><button>A4</button></div>
  </section>

  <section class="panel cad">
    <h2 class="ptitle">CADLib Проект<span class="pc"><svg class="pin"><use href="#pin"/></svg><svg class="px"><use href="#x"/></svg></span></h2>
    <div class="cadgrid">
      <div class="cadmain">
        <div class="cbar">
          <svg class="i" viewBox="0 0 14 14"><path d="M2 6h10v7H1z" fill="#f3bf3a" stroke="#b9811a"/><path d="M6 1h4v5H5z" fill="#ffe08a" stroke="#b9811a"/></svg><i class="dk"></i><hr>
          <svg class="i" viewBox="0 0 14 14"><path d="M2 2h4v9H2z" fill="#f7c948" stroke="#b9811a"/><path d="M6 3h4v9H6z" fill="#e89a2a" stroke="#b9811a"/><path d="M9 11c1-3 4-3 4 0M9 8l1 2" stroke="#2a9a3a" stroke-width="1.500" fill="none"/></svg><hr>
          <svg class="i" viewBox="0 0 14 14"><path d="M5 2l5 5-5 5z" fill="#8a8a8a"/></svg><i class="dk gray"></i><hr>
          <svg class="i" viewBox="0 0 14 14"><path d="M2 2v10M2 5h4M2 11h4" stroke="#555"/><path d="M1 1h3v3H1z" fill="#e8a020"/><path d="M4 4h3v2H4zM4 10h3v2H4z" fill="#d07010"/><path d="M8 5h5M8 11h5" stroke="#2a62d0" stroke-width="1.500"/></svg><i class="dk"></i>
          <svg class="i" viewBox="0 0 14 14"><path d="M2 4h10v6H2z" fill="#dde6f2" stroke="#8a9ab5"/><path d="M4 7h6" stroke="#667"/></svg><hr>
          <svg class="i" viewBox="0 0 14 14"><path d="M1 3h7L5.500 7v3h-2V7z" fill="#fff" stroke="#222"/><path d="M9 6h4M9 9h4" stroke="#222" stroke-width="1.500"/></svg><i class="dk"></i>
          <svg class="i" viewBox="0 0 14 14"><path d="M1 13l3-11h2l1 3 1-3h2l3 11H9l-1-4H6l-1 4z" fill="#e8a83a" stroke="#a8701a" stroke-width=".7"/></svg><hr>
        </div>
        <div class="cbar two">
          <svg class="i" viewBox="0 0 14 14"><path d="M1 3h7v7H1z" fill="#f2b83a" stroke="#a8701a"/><path d="M4 6h8v7H4z" fill="#4a6fb8" stroke="#234"/><path d="M8 1h5v5H8z" fill="#aaa" stroke="#666"/><path d="M6 9h4v4H6z" fill="#fff"/></svg><i class="dk"></i>
          <svg class="i" viewBox="0 0 14 14"><path d="M2 4h10v6H2z" fill="#dde6f2" stroke="#8a9ab5"/><path d="M4 7h6" stroke="#667"/></svg>
          <svg class="i" viewBox="0 0 14 14"><circle cx="7" cy="7" r="6" fill="#1d78e0" stroke="#114a98"/><path d="M4 7l2 3 4-6" stroke="#fff" stroke-width="1.500" fill="none"/></svg><i class="dk"></i>
        </div>
        <div class="cpath">
          <label class="path"><svg class="s"><use href="#doc"/></svg><input aria-label="Путь" value=".Несущие конструкции покрытия"></label>
          <svg class="i" viewBox="0 0 14 14"><circle cx="7" cy="7" r="6" fill="#6dbb3c" stroke="#2d6a1a"/><circle cx="7" cy="7" r="4" fill="#dde"/><path d="M3 7l4-3v2h4v2H7v2z" fill="#fff" stroke="#345" stroke-width=".8"/></svg><i class="dk"></i>
          <svg class="i" viewBox="0 0 14 14"><path d="M1 3h5l1 2h6v8H1z" fill="#f5cf63" stroke="#b58a20"/><path d="M8 9V5H6l3-4 3 4h-2v4z" fill="#3aa53a" stroke="#fff" stroke-width=".5"/></svg>
          <svg class="i" viewBox="0 0 14 14"><circle cx="7" cy="7" r="6" fill="#6dbb3c" stroke="#2d6a1a"/><circle cx="7" cy="7" r="4" fill="#dde"/><path d="M11 7L7 4v2H3v2h4v2z" fill="#fff" stroke="#345" stroke-width=".8"/></svg><i class="dk"></i><hr>
          <button class="pinb" aria-label="Закрепить"><svg viewBox="0 0 14 14"><path d="M6 4l4-3 3 4-3 3-4 1-2-2zM5 8l-4 5" stroke="#555" stroke-width="1.200" fill="#ddd"/></svg></button>
        </div>
        <div class="treebox">
          <div class="tree" id="tree"></div>
          <div class="scroll"><svg viewBox="0 0 10 10"><path d="M1 7l4-4 4 4" fill="none" stroke="#555" stroke-width="1.500"/></svg><i></i><svg viewBox="0 0 10 10"><path d="M1 3l4 4 4-4" fill="none" stroke="#555" stroke-width="1.500"/></svg></div>
        </div>
        <div class="list" id="list"></div>
        <div class="find"><input aria-label="Поиск"><button>x</button></div>
      </div>
      <div class="vtabs"><button>Свойства элемента</button><button>Задания</button><button class="on">CadLib Проект</button><button>Текущие переменные</button></div>
    </div>
    <div class="btabs c"><button>Узлы и готовые реш...</button><button>Спецификация</button><button class="on">CADLib Проект</button></div>
  </section>

  <section class="cmd">
    <div class="cside"><svg class="px"><use href="#x"/></svg><svg class="pin"><use href="#pin"/></svg><span>Ком</span></div>
    <div class="cbody">
      <div class="log"><p>NBIM_MBEAM - Балка</p><p>NBIM_MBEAM - Балка</p><p>ОБЪЕКТИЗОЛ - Изолировать объекты</p></div>
      <label class="prompt">Команда:<input></label>
    </div>
  </section>
</main>

<footer class="status">
  <span class="coords">10264.1845,16389.1506,0.0000</span>
  <button>ШАГ</button><button>СЕТКА</button><button class="on">оПРИВЯЗКА</button><button class="on">3D оПРИВЯЗКА</button><button>ОТС-ОБЪЕКТ</button><button>ОТС-ПОЛЯР</button><button>ОРТО</button><button>ДИН-ВВОД</button><button>ИЗО</button><button>ВЕС</button><button class="on">ШТРИХОВКА</button>
  <span class="fill"></span>
  <button class="n">МОДЕЛЬ</button>
  <button class="ic sm" aria-label="Блокировка"><svg viewBox="0 0 16 16"><path d="M1 7h7v7H1zM8 4h7v6H8z" fill="#777" stroke="#444"/><path d="M3 7V4h3v3M10 4V1h3v3" stroke="#444" fill="none"/><path d="M2 9h5M2 12h5" stroke="#ccc"/></svg></button>
  <button class="combo" aria-label="Слой"><svg viewBox="0 0 16 16"><path d="M1 2h12v10H1z" fill="#eee" stroke="#999"/><path d="M8 10h8l-4 5z" fill="#222"/></svg><i class="dk"></i></button>
  <button class="ic sm" aria-label="Выбор"><svg viewBox="0 0 16 16"><path d="M1 1h13v13H1z" fill="#d5edf9" stroke="#1d9be0" stroke-dasharray="2 1"/><circle cx="6" cy="6" r="3" fill="none" stroke="#1d7fd0" stroke-width="1.500"/><use href="#cur" x="9" y="6" width="7" height="10"/></svg></button>
  <button class="ic" aria-label="Свет"><svg viewBox="0 0 14 16"><circle cx="7" cy="5.500" r="4.500" fill="#ffe9a0" stroke="#c9a84a"/><path d="M5 10h4v5H5z" fill="#999"/></svg></button>
  <button class="ic on" aria-label="Запрет"><svg viewBox="0 0 16 16"><path d="M5 12V5l4-1M9 3v8" stroke="#888" fill="none"/><circle cx="8" cy="8" r="6.500" fill="none" stroke="#f25a5a" stroke-width="1.500"/><path d="M3.500 12.500l9-9" stroke="#f25a5a" stroke-width="1.500"/></svg></button>
  <button class="ic on" aria-label="ПСК"><svg viewBox="0 0 16 16"><path d="M2 1v13h13M0 3l2-2 2 2M13 12l2 2-2 2M10 1L6 8h5l-5 4" stroke="#333" fill="none" stroke-width="1.200"/></svg></button>
  <button class="scale">М1:10</button>
  <button class="ic" aria-label="Рука"><svg viewBox="0 0 16 16"><path d="M4 14L2 8l2-1V3l2 3V2l2 4V2l2 4V3l2 4v4l-2 3z" fill="#fff" stroke="#999"/></svg></button>
  <button class="ic" aria-label="Зум"><svg><use href="#zoomb"/></svg></button>
  <button class="ic" aria-label="Зум всё"><svg viewBox="0 0 16 16"><path d="M1 1h14v14H1z" fill="#74cdf2"/><circle cx="7" cy="7" r="3" fill="none" stroke="#246" stroke-width="1.300"/><path d="M9 9l3 4" stroke="#246" stroke-width="1.500"/></svg></button>
  <button class="ic" aria-label="Зум рамка"><svg viewBox="0 0 16 16"><path d="M1 1h11v9H1z" fill="none" stroke="#1d9be0" stroke-width="1.300"/><circle cx="10" cy="10" r="3" fill="#fff" stroke="#555"/><path d="M12 12l3 3" stroke="#555" stroke-width="1.500"/></svg></button>
  <button class="ic" aria-label="Орбита"><svg viewBox="0 0 16 16"><ellipse cx="8" cy="9" rx="7" ry="3" fill="none" stroke="#888"/><path d="M8 2v13M6 3l2-2 2 2" stroke="#888" fill="none"/></svg></button>
  <button class="ic" aria-label="Обновить"><svg viewBox="0 0 16 16"><path d="M2 8a6 6 0 0 1 11-3M14 8a6 6 0 0 1-11 3" fill="none" stroke="#4cc44c" stroke-width="1.800"/><path d="M15 7l-4-2 4-2zM1 9l4 2-4 2z" fill="#4cc44c"/></svg></button>
  <button class="ic sm" aria-label="Замок"><svg viewBox="0 0 16 16"><path d="M1 1h11v5M1 1v9h4" fill="none" stroke="#999"/><path d="M6 8h9v7H6z" fill="#888"/><path d="M8 8V5h5v3" fill="none" stroke="#888" stroke-width="1.300"/></svg></button>
  <button class="n"><svg viewBox="0 0 12 12"><path d="M1 4h7v7H1z" fill="#f2b04a" stroke="#222"/><path d="M1 4l3-3h7L8 4zM8 4l3-3v7l-3 3z" fill="#c97a12" stroke="#222"/></svg>3D-режим</button>
  <button class="n"><i class="sq"></i>Показ узлов</button>
  <button class="n">LOD</button>
  <button class="n"><svg viewBox="0 0 16 14"><path d="M1 1h14v4c-5 0-6 2-6 6l-8 2z" fill="#fff" stroke="#333"/></svg>Контур</button>
  <button class="ic sm" aria-label="Экран"><svg viewBox="0 0 16 14"><path d="M2 2h12v10H2z" fill="#1d9be0" stroke="#888"/><path d="M0 0h3v3H0zM13 0h3v3h-3zM0 11h3v3H0zM13 11h3v3h-3z" fill="#888"/></svg></button>
</footer>
<script src="app.js"></script>
</body>
</html>
```
FILE: styles.css
```css
* { box-sizing: border-box; }
body { margin: 0; height: 100vh; display: flex; flex-direction: column; background: #d0d0d0; color: #333; font: 11px/16px "Noto Sans", "Open Sans", sans-serif; overflow: hidden; }
button, input { font: inherit; color: inherit; border: 0; padding: 0; margin: 0; background: none; }
h1, h2, p { margin: 0; font: inherit; }
hr { border: 0; margin: 0; }
a { color: inherit; text-decoration: none; }
svg { display: block; flex: none; }
.defs { position: absolute; width: 0; height: 0; }

.dn, .dk { display: inline-block; flex: none; border: 3px solid transparent; border-top: 3px solid #888; border-bottom: 0; }
.dn.lg { border-width: 4px; border-top: 5px solid #777; border-bottom: 0; }
.dk { border-width: 4px; border-top: 4px solid #111; border-bottom: 0; }
.dk.gray { border-top-color: #888; }

/* title bar */
.titlebar { display: flex; height: 24px; flex: none; background: #fff; border-bottom: 1px solid #8a8a8a; }
.quick { display: flex; align-items: center; gap: 5px; width: 247px; padding: 2px 0 0 48px; background: #d0d0d0; height: 24px; }
.quick button { display: flex; align-items: center; gap: 5px; }
.quick button svg { width: 17px; height: 17px; }
.quick .w22 { width: 29px; }
.quick .more { margin-left: 16px; }
.titlebar h1 { flex: 1; font: 12px/22px Roboto, sans-serif; text-align: center; white-space: nowrap; overflow: hidden; color: #222; }
.help { width: 68px; height: 24px; background: #d0d0d0; display: flex; align-items: center; gap: 11px; padding-left: 4px; color: #555; font-weight: bold; font-size: 13px; }
.framed { border: 1px solid #aaa; padding: 2px; }
.framed svg { width: 15px; height: 15px; }
.winbtns { width: 138px; display: flex; }
.winbtns button { flex: 1; display: grid; place-items: center; }
.winbtns svg { width: 10px; height: 10px; }
.logo { position: absolute; left: 8px; top: 6px; width: 27px; height: 30px; }
.menu { display: flex; height: 22px; flex: none; padding-left: 43px; border-bottom: 1px solid #a0a0a0; line-height: 22px; }
.menu a { padding: 0 11px; }
.menu .on { background: #e8e8e8; margin: 2px 0 -1px; line-height: 19px; }

/* ribbon */
.ribbon { display: flex; gap: 2px; flex: none; height: 97px; padding: 1px 4px 2px; background: #e8e8e8; border-bottom: 1px solid #a0a0a0; white-space: nowrap; }
.group { display: flex; flex-direction: column; border: 1px solid #b4b4b4; }
.group h2 { height: 18px; line-height: 18px; text-align: center; background: #d9d9d9; }
.tools { flex: 1; display: flex; padding: 4px 2px 0; }
.g-axes { width: 46px; } .g-conc { width: 220px; } .g-met { width: 245px; } .g-node { width: 172px; }
.g-gen { width: 245px; } .g-doc { width: 173px; } .g-rep { width: 225px; } .g-srv { width: 71px; }
.big { display: flex; flex-direction: column; align-items: center; height: 66px; padding-top: 2px; line-height: 16px; }
.big svg { width: 32px; height: 32px; margin-bottom: 3px; }
.big.on { background: #cecece; border: 1px solid #b8b8b8; padding-top: 1px; }
.big > .dn.lg { margin-top: 3px; }
.w42 { width: 41px; } .w43 { width: 40px; } .w46 { width: 46px; } .w48 { width: 48px; } .w54 { width: 54px; } .w65 { width: 66px; } .w82 { width: 82px; }
.col { display: grid; grid-auto-rows: 22px; align-content: start; padding: 0 4px; }
.col button { display: flex; align-items: center; gap: 5px; height: 16px; }
.col svg { width: 16px; height: 16px; }
.tools > hr { width: 1px; height: 64px; margin: 0 1px; background: #444; flex: none; }
.tools > hr.soft { width: 2px; background: #888; }
.g-met .col, .g-rep .col { padding: 0 5px; }
.g-node .col { padding: 0 4px 0 5px; }
.g-node .next { padding: 0 17px 0 0; }
.g-gen .txt { padding: 0 6px 0 0; width: 89px; }
.txt button { gap: 2px; }
.g-doc .col { padding: 0 5px; width: 36px; }
.exp { position: relative; }
.exp span { position: absolute; left: 0; width: 16px; top: -3px; font: bold 7px/8px "Liberation Sans", sans-serif; display: flex; justify-content: center; }
.g-rep .mid { padding: 26px 0 0 7px; }

/* dock */
.work { flex: 1; min-height: 0; display: grid; grid-template: 1fr auto / 276px 1fr 308px; column-gap: 3px; padding: 1px 2px 1px; }
.panel { display: flex; flex-direction: column; min-width: 0; min-height: 0; }
.ptitle { display: flex; align-items: center; height: 22px; padding: 0 5px 0 2px; flex: none; color: #666; }
.pc { margin-left: auto; display: flex; gap: 7px; align-items: center; }
.pin { width: 9px; height: 11px; } .px { width: 9px; height: 9px; }
.props { background: #e8e8e8; border-right: 1px solid #a8a8a8; }
.props .ptitle { background: #d0d0d0; }
.pbar { display: flex; align-items: center; height: 28px; flex: none; background: #e8e8e8; border: 1px solid #a8a8a8; border-width: 1px 0 0; gap: 2px; padding-left: 2px; }
.pbar button { width: 21px; height: 22px; display: grid; place-items: center; }
.pbar button svg { width: 20px; height: 18px; }
.pbar .on { background: #cfcfcf; border: 1px solid #aaa; }
.pbar hr { width: 1px; height: 14px; background: #aaa; margin: 0 1px; }
.ptable { border-collapse: collapse; width: 269px; height: 492px; margin-left: 2px; table-layout: fixed; color: #222; font: 10px/14px "DejaVu Sans Condensed", "Noto Sans", sans-serif; white-space: nowrap; flex: none; }
.ptable td { border: 1px solid #d4d4d4; padding: 0 0 0 2px; overflow: hidden; }
.ptable td:first-child { width: 119px; padding-left: 5px; }
.ptable th { background: #d0d0d0; text-align: left; font: bold 11px/14px "Noto Sans", sans-serif; color: #000; padding: 0 0 0 5px; }
.ptable th b { float: right; width: 7px; height: 2px; background: #000; margin: 7px 11px 0 0; }
.ptable .dim { color: #999; }
.ptable .lay { line-height: 14px; }
.layi { display: inline-block; width: 78px; height: 16px; vertical-align: middle; margin: -2px 2px -2px 1px; }
.swatch { display: inline-block; width: 12px; height: 11px; vertical-align: middle; margin: 0 3px 0 1px; }
.line { display: inline-block; width: 58px; height: 1px; background: #333; vertical-align: middle; margin: 0 1px; }
.btabs { margin-top: auto; display: flex; gap: 2px; background: #d0d0d0; padding: 0 0 1px 2px; height: 22px; flex: none; }
.btabs button { width: 38px; background: #c9c9c9; line-height: 20px; text-align: center; white-space: nowrap; overflow: hidden; }
.btabs button.on { background: #e8e8e8; width: 41px; }
.btabs button:nth-child(6) { width: 24px; }
.btabs.c { padding-left: 1px; }
.btabs.c button { width: auto; padding: 0 4px; }
.btabs.c button.on { flex: 1; }

/* documents */
.docs { display: flex; flex-direction: column; min-width: 0; min-height: 0; border: 1px solid #999; background: #fff; }
.dtabs { display: flex; align-items: center; height: 21px; flex: none; background: #d0d0d0; border-bottom: 1px solid #bbb; font: 11px/20px "Liberation Sans", sans-serif; color: #222; }
.dtabs button { display: flex; align-items: center; height: 20px; white-space: nowrap; }
.dtabs .t1 { padding: 0 33px 0 22px; }
.dtabs .t2 { background: #e8e8e8; padding: 0 4px 0 32px; gap: 60px; border-radius: 8px 0 0 0; }
.dtabs .dn { margin-left: auto; margin-right: 5px; }
.canvas { flex: 1; min-height: 0; position: relative; overflow: hidden; background: #fff; }
.pills { display: flex; gap: 4px; padding: 5px 8px; }
.pills span { background: #dcdcdc; color: #fff; border-radius: 8px; height: 15px; padding: 0 9px; font: 11px/15px "Liberation Sans", sans-serif; }
.model { position: absolute; left: 448px; top: 43px; width: 480px; height: 690px; }
.compass { position: absolute; right: 15px; top: 15px; width: 164px; height: 164px; }
.ucs { position: absolute; left: 0; bottom: 0; width: 168px; height: 164px; font: 42px "Liberation Sans", sans-serif; fill: #333; }
.mtabs { display: flex; align-items: center; height: 20px; flex: none; background: #d0d0d0; gap: 2px; padding-left: 4px; }
.mtabs svg { width: 14px; height: 14px; margin-right: 16px; }
.mtabs button { width: 21px; height: 20px; background: #c9c9c9; line-height: 18px; }
.mtabs .on { width: 52px; background: #e8e8e8; }

/* CADLib panel */
.cad { border-left: 1px solid #999; grid-row: 1 / 3; grid-column: 3; }
.cad .ptitle { padding-right: 1px; }
.cadgrid { flex: 1; min-height: 0; display: grid; grid-template-columns: 1fr 19px; }
.cadmain { display: flex; flex-direction: column; min-width: 0; background: #fff; border-top: 1px solid #aaa; margin-left: 1px; font: 9px/12px "Liberation Sans", sans-serif; color: #111; }
.cbar, .cpath { display: flex; align-items: center; gap: 5px; flex: none; height: 22px; padding-left: 2px; background: #f0f0f0; }
.cbar { border-bottom: 1px solid #aaa; }
.cbar.two { height: 25px; border: 0; }
.i { width: 14px; height: 14px; }
.cbar hr, .cpath hr { width: 1px; height: 14px; background: #999; }
.cpath { height: 21px; padding-left: 0; }
.path { display: flex; align-items: center; gap: 5px; width: 180px; height: 20px; background: #fff; border: 1px solid #aaa; border-left: 0; border-top: 0; padding-left: 3px; margin-right: 5px; }
.path input { flex: 1; min-width: 0; }
.s { width: 10px; height: 10px; }
.pinb { flex: 1; align-self: stretch; background: #cce8ff; border: 1px solid #99d1ff; display: grid; place-items: center; }
.pinb svg { width: 13px; height: 13px; }
.treebox { display: flex; height: 258px; flex: none; overflow: hidden; border-bottom: 1px solid #aaa; }
.tree { flex: 1; min-width: 0; height: 256px; display: grid; grid-auto-rows: 1fr; padding-left: 2px; }
.scroll { width: 16px; background: #f0f0f0; display: flex; flex-direction: column; align-items: center; padding: 4px 0; flex: none; }
.scroll svg { width: 10px; height: 10px; }
.scroll i { width: 16px; height: 100px; background: #c9c9c9; margin: 3px 0 auto; }
.row { display: flex; align-items: stretch; white-space: nowrap; }
.row > * { align-self: center; }
.row > i { align-self: stretch; width: 15px; flex: none; position: relative; }
.row > .v::before { content: ""; position: absolute; left: 7px; top: 0; bottom: 0; border-left: 1px dotted #999; }
.row > .e::after { content: ""; position: absolute; left: 7px; width: 9px; top: 6px; border-top: 1px dotted #999; }
.exbox { position: absolute; left: 3px; top: 2px; width: 9px; height: 9px; background: #f6f6f6; border: 1px solid #aaa; z-index: 1; }
.exbox::before, .plus::after { content: ""; position: absolute; background: #3a5fae; left: 1px; top: 3px; width: 5px; height: 1px; }
.plus::after { left: 3px; top: 1px; width: 1px; height: 5px; }
.row svg { width: 13px; height: 12px; margin: 0 2px; }
.row .t { padding: 0 1px; line-height: 12px; }
.row .sel { background: #eee; }
.list { height: 435px; display: grid; grid-auto-rows: 1fr; padding-left: 2px; margin-top: 3px; flex: none; }
.list .t { flex: 1; }
.list svg.m { width: 10px; margin: 0 3px 0 0; }
.find { margin-top: auto; display: flex; gap: 3px; padding: 1px; height: 18px; background: #f0f0f0; }
.find input { flex: 1; min-width: 0; background: #fff; border: 1px solid #999; }
.find button { width: 12px; background: #e4e4e4; border: 1px solid #bbb; line-height: 10px; }
.vtabs { display: flex; flex-direction: column; background: #d0d0d0; padding-top: 2px; }
.vtabs button { height: 123px; writing-mode: vertical-rl; transform: rotate(180deg); text-align: center; font: 10px/17px "Noto Sans", sans-serif; white-space: nowrap; background: #cbcbcb; }
.vtabs .on { background: #e8e8e8; }

/* command line */
.cmd { display: flex; height: 57px; margin-top: 3px; grid-column: 1 / 3; min-width: 0; }
.cside { width: 20px; display: flex; flex-direction: column; align-items: center; gap: 6px; padding-top: 6px; flex: none; }
.cside .pin { transform: rotate(90deg); }
.cside span { writing-mode: vertical-rl; transform: rotate(180deg); line-height: 14px; height: 24px; }
.cbody { flex: 1; min-width: 0; background: #e8e8e8; display: flex; flex-direction: column; font: 11px/15px "Liberation Mono", monospace; margin-top: 2px; }
.log { height: 40px; padding: 0 0 2px 3px; overflow: hidden; display: flex; flex-direction: column; justify-content: flex-end; flex: none; }
.prompt { flex: 1; display: flex; align-items: center; border-top: 1px solid #888; padding-left: 2px; }
.prompt input { flex: 1; margin-left: 4px; height: 14px; border-left: 1px solid #222; }

/* status bar */
.status { display: flex; height: 24px; flex: none; border-bottom: 2px solid #b4b4b4; gap: 1px; padding-top: 1px; white-space: nowrap; overflow: hidden; }
.status button { background: #e8e8e8; padding: 0 6px; line-height: 20px; display: flex; align-items: center; gap: 2px; border-right: 1px solid #dadada; }
.status .on { background: #c8c8c8; border: 1px solid #aaa; line-height: 18px; }
.coords { padding-left: 4px; width: 171px; line-height: 21px; border-right: 1px solid #999; }
.fill { flex: 1; }
.status .ic { width: 26px; padding: 0; justify-content: center; }
.status .sm { width: 20px; }
.status svg { width: 15px; height: 15px; }
.status .n { padding: 0 3px; }
.status .combo { width: 136px; justify-content: space-between; padding: 0 4px; }
.status .scale { width: 70px; justify-content: center; }
.sq { width: 4px; height: 4px; background: #333; margin: 0 5px 0 3px; }
```
FILE: app.js
```js
// level, icon, label, state: '+' collapsed, '-' expanded, '' leaf
const nodes = [
  [0, 'pub', 'Мои публикации', ''],
  [0, 'crane', 'Здания и сооружения', '-'],
  [1, 'crane', '01.Офисный центр', '-'],
  [2, 'house', '001.Офисное здание', '-'],
  [3, 'folder', 'Ситуация', '+'],
  [3, 'folder', 'Системы', '+'],
  [3, 'folder', 'Конструкции', '-'],
  [4, 'docs', 'АР.Архитектурные решения', '+'],
  [4, 'docs', 'КЖ.Конструкции железобетонные', '-'],
  [5, 'doc', '.Перекрытия', '+'],
  [5, 'doc', '.Лестницы и площадки', '+'],
  [5, 'doc', '.Крыльца и пандусы', '+'],
  [5, 'doc', '.Монолитная стена', '+'],
  [5, 'doc', '.Колонны', '+'],
  [5, 'doc', '.Плита фундаментная', '+'],
  [5, 'doc', '.Диафрагма жесткости', '+'],
  [5, 'doc', '.Несущие конструкции покрытия', '+', 'sel'],
  [5, 'doc', 'Вентшахты.', '+'],
  [5, 'doc', 'Перекрытие +6.600.', '+'],
  [4, 'docs', 'КД.Конструкции деревянные', '+']
];
const icon = (id, cls = '') => `<svg class="${cls}"><use href="#${id}"/></svg>`;
const box = s => s ? `<b class="exbox ${s === '+' ? 'plus' : ''}"></b>` : '';

document.getElementById('tree').innerHTML = nodes.map(([lvl, ic, label, state, sel = '']) => {
  let guides = '';
  for (let k = 0; k < lvl; k++) guides += `<i class="${k === 1 ? '' : 'v'}"></i>`;
  return `<div class="row">${guides}<i class="e v">${box(state)}</i>${icon(ic)}<span class="t ${sel}">${label}</span></div>`;
}).join('');

const parts = [...Array(31).fill('Ригель Б48-1'), ...Array(3).fill('Сборка Р2 Ригель')];
document.getElementById('list').innerHTML = parts.map(p =>
  `<div class="row"><i class="e v">${box('+')}</i>${icon('part')}<span class="t">${p}</span>${icon('eye')}${icon('mag', 'm')}</div>`
).join('');
```
